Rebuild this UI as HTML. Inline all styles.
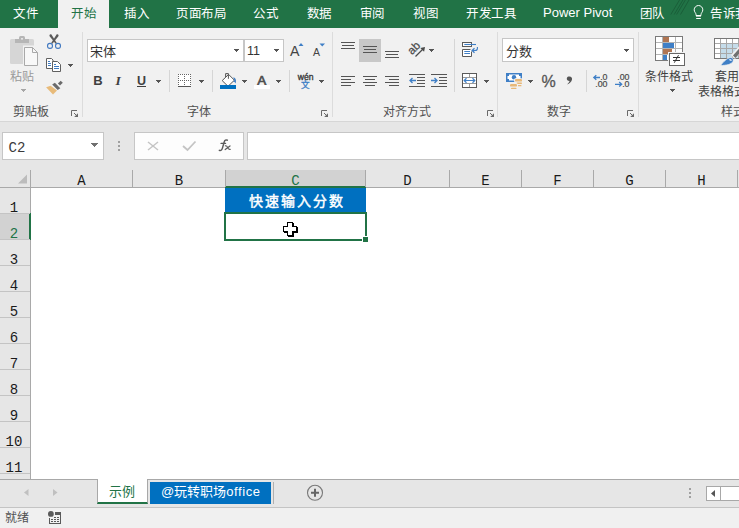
<!DOCTYPE html>
<html lang="zh-CN">
<head>
<meta charset="utf-8">
<style>
*{box-sizing:border-box;margin:0;padding:0}
html,body{width:739px;height:528px;overflow:hidden;background:#fff}
body{position:relative;font-family:"Liberation Sans",sans-serif;color:#262626}
.a{position:absolute}
.t{position:absolute;white-space:nowrap;line-height:1}
.tab{position:absolute;top:6.5px;font-size:12.5px;letter-spacing:-0.5px;color:#fff;white-space:nowrap;line-height:14px}
.gl{position:absolute;top:105px;font-size:12px;color:#505050;line-height:14px;white-space:nowrap}
.rt{position:absolute;font-size:12px;color:#404040;line-height:14px;white-space:nowrap}
.box{position:absolute;background:#fff;border:1px solid #c6c6c6}
.ch{position:absolute;top:0;height:17px;border-right:1px solid #d0d0d0;font-family:"Liberation Mono",monospace;font-size:12px;text-align:center;line-height:19px;color:#262626}
.rh{position:absolute;left:0;width:31px;height:26px;background:#e6e6e6;border-bottom:1px solid #d0d0d0;border-right:1px solid #ababab;font-family:"Liberation Mono",monospace;font-size:12px;text-align:center;line-height:34px;color:#262626}
svg{position:absolute;left:0;top:0}
.hl{position:absolute;width:40px;text-align:center;font-family:"Liberation Mono",monospace;font-size:14px;line-height:20px;white-space:nowrap}
</style>
</head>
<body>
<!-- TAB BAR -->
<div class="a" style="left:0;top:0;width:739px;height:28px;background:#217346"></div>
<div class="a" style="left:58px;top:0;width:51px;height:28px;background:#f1f1f1"></div>
<div class="tab" style="left:13px">文件</div>
<div class="tab" style="left:71px;color:#217346">开始</div>
<div class="tab" style="left:124px">插入</div>
<div class="tab" style="left:176px">页面布局</div>
<div class="tab" style="left:253px">公式</div>
<div class="tab" style="left:306.5px">数据</div>
<div class="tab" style="left:359.5px">审阅</div>
<div class="tab" style="left:413px">视图</div>
<div class="tab" style="left:466px">开发工具</div>
<div class="tab" style="left:543px;font-size:13px;top:5px;line-height:16px;letter-spacing:0">Power Pivot</div>
<div class="tab" style="left:639.5px">团队</div>
<div class="tab" style="left:710px">告诉我</div>

<!-- RIBBON -->
<div class="a" style="left:0;top:28px;width:739px;height:93px;background:#f1f1f1"></div>
<div class="a" style="left:0;top:121px;width:739px;height:1px;background:#d6d6d6"></div>
<div class="gl" style="left:13px">剪贴板</div>
<div class="gl" style="left:187px">字体</div>
<div class="gl" style="left:383px">对齐方式</div>
<div class="gl" style="left:547px">数字</div>
<div class="gl" style="left:721px">样式</div>
<div class="rt" style="left:10px;top:70px;color:#9a9a9a">粘贴</div>
<div class="rt" style="left:645px;top:70px">条件格式</div>
<div class="rt" style="left:715px;top:70px">套用</div>
<div class="rt" style="left:697.5px;top:84.5px">表格格式</div>

<!-- font boxes -->
<div class="box" style="left:87px;top:39px;width:157px;height:23px"></div>
<div class="box" style="left:244px;top:39px;width:40px;height:23px"></div>
<div class="rt" style="left:89.5px;top:44px;font-size:13px;line-height:15px;color:#333">宋体</div>
<div class="t" style="left:247px;top:45px;font-size:12.5px;color:#333">11</div>
<div class="box" style="left:502px;top:38px;width:132px;height:24px"></div>
<div class="rt" style="left:505.5px;top:44px;font-size:13px;line-height:15px;color:#333">分数</div>

<!-- FORMULA BAR -->
<div class="a" style="left:0;top:122px;width:739px;height:48px;background:#e6e6e6"></div>
<div class="box" style="left:2px;top:132px;width:102px;height:28px;border-color:#c6c6c6"></div>
<div class="t" style="left:8.5px;top:138px;font-family:'Liberation Mono',monospace;font-size:14px;line-height:20px;color:#3a3a3a">C2</div>
<div class="box" style="left:134px;top:132px;width:110px;height:28px;background:#fdfdfd"></div>
<div class="box" style="left:247px;top:132px;width:500px;height:28px"></div>

<!-- COLUMN HEADERS -->
<div class="a" style="left:0;top:170px;width:739px;height:17px;background:#e6e6e6"></div>
<div class="a" style="left:226px;top:170px;width:139px;height:16px;background:#d2d2d2"></div>
<div class="a" style="left:225px;top:186px;width:141px;height:2px;background:#217346"></div>
<div class="a" style="left:30px;top:170px;width:1px;height:17px;background:#a9a9a9"></div>
<div class="a" style="left:132px;top:170px;width:1px;height:17px;background:#a9a9a9"></div>
<div class="a" style="left:225px;top:170px;width:1px;height:17px;background:#a9a9a9"></div>
<div class="a" style="left:365px;top:170px;width:1px;height:17px;background:#a9a9a9"></div>
<div class="a" style="left:449px;top:170px;width:1px;height:17px;background:#a9a9a9"></div>
<div class="a" style="left:521px;top:170px;width:1px;height:17px;background:#a9a9a9"></div>
<div class="a" style="left:593px;top:170px;width:1px;height:17px;background:#a9a9a9"></div>
<div class="a" style="left:665px;top:170px;width:1px;height:17px;background:#a9a9a9"></div>
<div class="a" style="left:737px;top:170px;width:1px;height:17px;background:#a9a9a9"></div>
<div class="a" style="left:0;top:187px;width:225px;height:1px;background:#a9a9a9"></div>
<div class="a" style="left:366px;top:187px;width:373px;height:1px;background:#a9a9a9"></div>
<div class="hl" style="left:61.5px;top:171px;color:#1a1a1a">A</div>
<div class="hl" style="left:159.0px;top:171px;color:#1a1a1a">B</div>
<div class="hl" style="left:275.5px;top:171px;color:#217346">C</div>
<div class="hl" style="left:387.5px;top:171px;color:#1a1a1a">D</div>
<div class="hl" style="left:465.5px;top:171px;color:#1a1a1a">E</div>
<div class="hl" style="left:537.5px;top:171px;color:#1a1a1a">F</div>
<div class="hl" style="left:609.5px;top:171px;color:#1a1a1a">G</div>
<div class="hl" style="left:681.5px;top:171px;color:#1a1a1a">H</div>
<!-- ROW HEADERS -->
<div class="a" style="left:0;top:188px;width:30px;height:291px;background:#e6e6e6"></div>
<div class="a" style="left:0;top:214px;width:29px;height:25px;background:#d2d2d2"></div>
<div class="a" style="left:30px;top:170px;width:1px;height:309px;background:#a9a9a9"></div>
<div class="a" style="left:29px;top:213px;width:2px;height:27px;background:#217346"></div>
<div class="a" style="left:0;top:213px;width:30px;height:1px;background:#c4c4c4"></div>
<div class="a" style="left:0;top:239px;width:30px;height:1px;background:#c4c4c4"></div>
<div class="a" style="left:0;top:265px;width:30px;height:1px;background:#c4c4c4"></div>
<div class="a" style="left:0;top:291px;width:30px;height:1px;background:#c4c4c4"></div>
<div class="a" style="left:0;top:317px;width:30px;height:1px;background:#c4c4c4"></div>
<div class="a" style="left:0;top:343px;width:30px;height:1px;background:#c4c4c4"></div>
<div class="a" style="left:0;top:369px;width:30px;height:1px;background:#c4c4c4"></div>
<div class="a" style="left:0;top:395px;width:30px;height:1px;background:#c4c4c4"></div>
<div class="a" style="left:0;top:421px;width:30px;height:1px;background:#c4c4c4"></div>
<div class="a" style="left:0;top:447px;width:30px;height:1px;background:#c4c4c4"></div>
<div class="a" style="left:0;top:473px;width:30px;height:1px;background:#c4c4c4"></div>
<div class="hl" style="left:-6px;top:198px;color:#1a1a1a">1</div>
<div class="hl" style="left:-6px;top:224px;color:#217346">2</div>
<div class="hl" style="left:-6px;top:250px;color:#1a1a1a">3</div>
<div class="hl" style="left:-6px;top:276px;color:#1a1a1a">4</div>
<div class="hl" style="left:-6px;top:302px;color:#1a1a1a">5</div>
<div class="hl" style="left:-6px;top:328px;color:#1a1a1a">6</div>
<div class="hl" style="left:-6px;top:354px;color:#1a1a1a">7</div>
<div class="hl" style="left:-6px;top:380px;color:#1a1a1a">8</div>
<div class="hl" style="left:-6px;top:406px;color:#1a1a1a">9</div>
<div class="hl" style="left:-6px;top:432px;color:#1a1a1a">10</div>
<div class="hl" style="left:-6px;top:458px;color:#1a1a1a">11</div>
<!-- CELLS -->
<div class="a" style="left:225px;top:188px;width:141px;height:24px;background:#0070c0"></div>
<div class="t" style="left:249px;top:194px;font-size:14px;font-weight:normal;-webkit-text-stroke:0.45px #fff;color:#fff;letter-spacing:2px">快速输入分数</div>
<div class="a" style="left:224px;top:212px;width:143px;height:29px;border:2px solid #217346"></div>
<div class="a" style="left:362px;top:236px;width:7px;height:7px;background:#217346;border:1px solid #fff"></div>

<!-- SHEET TABS -->
<div class="a" style="left:0;top:479px;width:739px;height:29px;background:#e6e6e6;border-top:1px solid #a8a8a8;border-bottom:1px solid #c4c4c4"></div>
<div class="a" style="left:97px;top:479px;width:51px;height:25px;background:#fff;border-left:1px solid #a8a8a8;border-right:1px solid #a8a8a8;border-bottom:2px solid #217346"></div>
<div class="t" style="left:109px;top:485px;font-size:13px;color:#217346">示例</div>
<div class="a" style="left:150px;top:482px;width:121px;height:22px;background:#0070c0"></div>
<div class="t" style="left:161px;top:484px;font-size:13px;color:#fff;line-height:15px">@玩转职场<span style="letter-spacing:0.6px">office</span></div>
<div class="a" style="left:273px;top:482px;width:1px;height:22px;background:#b0b0b0"></div>
<div class="a" style="left:706px;top:486px;width:15px;height:15px;background:#fff;border:1px solid #a8a8a8"></div>
<div class="a" style="left:720px;top:486px;width:30px;height:15px;background:#fff;border:1px solid #a8a8a8"></div>

<!-- STATUS -->
<div class="a" style="left:0;top:508px;width:739px;height:20px;background:#f0f0f0"></div>
<div class="t" style="left:5px;top:511px;font-size:12px;color:#505050;line-height:14px">就绪</div>

<svg width="739" height="528" viewBox="0 0 739 528">
 <!-- tab bar hatch + bulb -->
 <g stroke="#1a5e39" stroke-width="1">
  <line x1="679.5" y1="0" x2="670.8" y2="14.5"/><line x1="682.9" y1="0" x2="674.2" y2="14.5"/>
  <line x1="685.3" y1="0" x2="676.6" y2="14.5"/><line x1="689" y1="0" x2="680.5" y2="14.5"/>
 </g>
 <g fill="none" stroke="#fff" stroke-width="1">
  <path d="M696 15.5 V14.5 C696 13 694.2 12 694.2 9.8 A4.3 4.3 0 0 1 702.8 9.8 C702.8 12 701 13 701 14.5 V15.5 Z"/>
 </g>
 <rect x="696" y="15" width="5" height="1.6" fill="#fff"/>
 <rect x="696.2" y="18" width="4.6" height="1" fill="#fff"/>
 <!-- group separators -->
 <g fill="#dcdcdc">
  <rect x="82" y="32" width="1" height="85"/><rect x="332" y="32" width="1" height="85"/>
  <rect x="497" y="32" width="1" height="85"/><rect x="638" y="32" width="1" height="85"/>
 </g>
 <!-- launchers -->
 <g>
  <path d="M71.5 116 V110.5 H77" fill="none" stroke="#6a6a6a"/><path d="M78 113.2 V117 H74.2 Z" fill="#6a6a6a"/><path d="M74 113 L76.5 115.5" stroke="#6a6a6a" stroke-width="1"/>
  <path d="M321.5 116 V110.5 H327" fill="none" stroke="#6a6a6a"/><path d="M328 113.2 V117 H324.2 Z" fill="#6a6a6a"/><path d="M324 113 L326.5 115.5" stroke="#6a6a6a" stroke-width="1"/>
  <path d="M487.5 116 V110.5 H493" fill="none" stroke="#6a6a6a"/><path d="M494 113.2 V117 H490.2 Z" fill="#6a6a6a"/><path d="M490 113 L492.5 115.5" stroke="#6a6a6a" stroke-width="1"/>
  <path d="M627.5 116 V110.5 H633" fill="none" stroke="#6a6a6a"/><path d="M634 113.2 V117 H630.2 Z" fill="#6a6a6a"/><path d="M630 113 L632.5 115.5" stroke="#6a6a6a" stroke-width="1"/>
 </g>
 <!-- paste -->
 <rect x="10" y="39" width="24" height="25" rx="1.5" fill="#d6d6d6"/>
 <rect x="15" y="39" width="14" height="4" fill="#b6b6b6"/>
 <path d="M19 40 V37.5 Q19 36 20.5 36 H23.5 Q25 36 25 37.5 V40 Z" fill="#b6b6b6"/>
 <rect x="21.2" y="38" width="1.6" height="1.6" fill="#f1f1f1"/>
 <rect x="23" y="45.5" width="16" height="21" fill="#f1f1f1"/>
 <path d="M24.5 47.5 H32.5 L37.5 52.5 V65.5 H24.5 Z" fill="#f8f8f8" stroke="#a9a9a9"/>
 <path d="M32.5 47.5 V52.5 H37.5" fill="none" stroke="#a9a9a9"/>
 <!-- scissors -->
 <path d="M49.4 35.2 C49.8 34.2 51 34 51.6 34.8 L56.8 43 L55.6 43.8 L49.8 36.4 Z" fill="#5a5a5a"/>
 <path d="M58.6 35.2 C58.2 34.2 57 34 56.4 34.8 L51.2 43 L52.4 43.8 L58.2 36.4 Z" fill="#5a5a5a"/>
 <g stroke="#4279c0" stroke-width="1.1" fill="none">
  <circle cx="50" cy="45.9" r="2.5"/><circle cx="58" cy="45.9" r="2.5"/>
 </g>
 <!-- copy -->
 <path d="M46.5 58.5 H51.5 L53 60 V68.5 H46.5 Z" fill="#fff" stroke="#606060"/>
 <path d="M52.5 61.5 H57.5 L60.5 64.5 V71.5 H52.5 Z" fill="#fff" stroke="#606060"/>
 <rect x="50.8" y="59.8" width="1.8" height="1.8" fill="#606060" opacity="0"/>
 <g stroke="#3f7bc0" stroke-width="1"><line x1="48" y1="61.5" x2="50" y2="61.5"/><line x1="48" y1="63.5" x2="51" y2="63.5"/><line x1="48" y1="65.5" x2="51" y2="65.5"/>
 <line x1="54" y1="64.5" x2="56" y2="64.5"/><line x1="54" y1="66.5" x2="59" y2="66.5"/><line x1="54" y1="68.5" x2="59" y2="68.5"/></g>
 <!-- format painter -->
 <path d="M46.1 87.3 L50.6 85.8 L57 90.6 L53 94.6 Z" fill="#e8bb7a"/>
 <path d="M52.2 84.5 L54.9 82.8 L60.3 88.3 L57.7 90 Z" fill="#6a6a6a"/>
 <path d="M57.9 83.4 L60.7 80.7 L62.8 82.8 L60 85.4 Z" fill="#6a6a6a"/>

 <!-- font box arrows -->
 <g fill="#555">
 </g>
 <!-- grow/shrink font -->
 <text x="290" y="56" font-family="Liberation Sans" font-size="14.2" fill="#444">A</text>
 <path d="M298.5 46 L301 43 L303.5 46 Z" fill="#3f7fc6"/>
 <text x="313" y="56" font-family="Liberation Sans" font-size="10.5" fill="#444">A</text>
 <path d="M319.5 43.5 L322.25 46.5 L325 43.5 Z" fill="#3f7fc6"/>
 <!-- B I U -->
 <text x="93.3" y="85" font-family="Liberation Sans" font-weight="bold" font-size="13" fill="#404040">B</text>
 <text x="115.5" y="85" font-family="Liberation Serif" font-style="italic" font-weight="bold" font-size="13.5" fill="#404040">I</text>
 <text x="137" y="85" font-family="Liberation Sans" font-weight="bold" font-size="12.5" fill="#404040">U</text>
 <rect x="137" y="86" width="9" height="1" fill="#404040"/>
 <g fill="#555">
 </g>
 <rect x="169" y="70" width="1" height="22" fill="#d6d6d6"/>
 <rect x="212" y="70" width="1" height="22" fill="#d6d6d6"/>
 <rect x="289" y="70" width="1" height="22" fill="#d6d6d6"/>
 <!-- borders icon -->
 <rect x="178" y="74" width="13" height="12" fill="#fff"/>
 <g fill="#666">
  <path d="M178 74h1v1h-1zM180 74h1v1h-1zM182 74h1v1h-1zM184 74h1v1h-1zM186 74h1v1h-1zM188 74h1v1h-1zM190 74h1v1h-1z"/>
  <path d="M178 80h1v1h-1zM180 80h1v1h-1zM182 80h1v1h-1zM186 80h1v1h-1zM188 80h1v1h-1zM190 80h1v1h-1zM184 80h1v1h-1z"/>
  <path d="M178 76h1v1h-1zM178 78h1v1h-1zM178 82h1v1h-1zM178 84h1v1h-1zM184 76h1v1h-1zM184 78h1v1h-1zM184 82h1v1h-1zM184 84h1v1h-1zM190 76h1v1h-1zM190 78h1v1h-1zM190 82h1v1h-1zM190 84h1v1h-1z"/>
 </g>
 <rect x="178" y="86" width="13" height="1" fill="#555"/>
 <!-- fill color -->
 <path d="M222.2 80.6 L228.6 74.4 L234.4 80.2 L228 86.3 Z" fill="#fff" stroke="#555" stroke-width="1"/>
 <path d="M225.6 77 V73.6 H228.4 V78.8" stroke="#555" stroke-width="1" fill="none"/>
 <path d="M233.2 77.6 C235.6 77.6 236.6 80 235.6 83.6 C235 82.2 234 81.4 232.8 81.6 L234.4 80.2 Z" fill="#3f7fc6"/>
 <rect x="220" y="85" width="16" height="4" fill="#0070c0"/>
 <!-- font color -->
 <text x="257.3" y="84.8" font-family="Liberation Sans" font-size="13.5" fill="#505050" stroke="#505050" stroke-width="0.7">A</text>
 <rect x="254" y="85" width="16" height="4" fill="#ffffff"/>
 <!-- phonetic -->
 <text x="297.8" y="80" font-family="Liberation Sans" font-size="8.6" fill="#3a3a3a" stroke="#3a3a3a" stroke-width="0.35">wén</text>
 <text x="301.2" y="88.2" font-size="8.6" fill="#3f7fc6" stroke="#3f7fc6" stroke-width="0.3">文</text>

 <!-- alignment -->
 <rect x="359" y="39" width="22" height="23" fill="#c8c8c8"/>
 <g stroke="#555" stroke-width="1">
  <line x1="341" y1="42.5" x2="355" y2="42.5"/><line x1="342" y1="45.5" x2="354" y2="45.5"/><line x1="341" y1="48.5" x2="355" y2="48.5"/>
  <line x1="363" y1="46.5" x2="377" y2="46.5"/><line x1="364" y1="49.5" x2="376" y2="49.5"/><line x1="363" y1="52.5" x2="377" y2="52.5"/>
  <line x1="385" y1="51.5" x2="399" y2="51.5"/><line x1="386" y1="54.5" x2="398" y2="54.5"/><line x1="385" y1="57.5" x2="399" y2="57.5"/>
  <!-- row2 -->
  <line x1="341" y1="76.5" x2="355" y2="76.5"/><line x1="341" y1="79.5" x2="351" y2="79.5"/><line x1="341" y1="82.5" x2="355" y2="82.5"/><line x1="341" y1="85.5" x2="351" y2="85.5"/>
  <line x1="363" y1="76.5" x2="377" y2="76.5"/><line x1="365" y1="79.5" x2="375" y2="79.5"/><line x1="363" y1="82.5" x2="377" y2="82.5"/><line x1="365" y1="85.5" x2="375" y2="85.5"/>
  <line x1="385" y1="76.5" x2="399" y2="76.5"/><line x1="389" y1="79.5" x2="399" y2="79.5"/><line x1="385" y1="82.5" x2="399" y2="82.5"/><line x1="389" y1="85.5" x2="399" y2="85.5"/>
  <line x1="409" y1="74.5" x2="425" y2="74.5"/><line x1="417" y1="77.5" x2="425" y2="77.5"/><line x1="417" y1="80.5" x2="425" y2="80.5"/><line x1="417" y1="83.5" x2="425" y2="83.5"/><line x1="409" y1="86.5" x2="425" y2="86.5"/>
  <line x1="431" y1="74.5" x2="447" y2="74.5"/><line x1="439" y1="77.5" x2="447" y2="77.5"/><line x1="439" y1="80.5" x2="447" y2="80.5"/><line x1="439" y1="83.5" x2="447" y2="83.5"/><line x1="431" y1="86.5" x2="447" y2="86.5"/>
 </g>
 <g stroke="#3f7fc6" stroke-width="1.3" fill="none">
  <path d="M416 80.5 H410 M412.5 78 L410 80.5 L412.5 83"/>
  <path d="M431 80.5 H437 M434.5 78 L437 80.5 L434.5 83"/>
 </g>
 <!-- orientation -->
 <text x="0" y="0" font-family="Liberation Sans" font-size="11.5" fill="#4a4a4a" stroke="#4a4a4a" stroke-width="0.25" transform="translate(412,55.2) rotate(-45)">ab</text>
 <path d="M415.5 56.5 L423 49" stroke="#4a4a4a" stroke-width="1.2"/>
 <path d="M425 47 L420.3 47.9 L424.1 51.7 Z" fill="#4a4a4a"/>
 <rect x="454" y="39" width="1" height="53" fill="#d6d6d6"/>
 <!-- wrap text -->
 <g fill="#fff" stroke="#5a5a5a" stroke-width="1">
  <rect x="462.5" y="42.5" width="9" height="4"/>
  <path d="M470.5 49.5 H462.5 V56.5 H471.5 V51.5"/>
 </g>
 <g stroke="#3f7fc6" stroke-width="1.1" fill="none">
  <path d="M464.3 44.5 H476"/>
  <path d="M464.3 51.5 H470 M464.3 53.5 H470"/>
  <path d="M477.4 47 V48.5 C477.4 50 476.5 50.5 475 50.5 H472"/>
  <path d="M474.5 48.3 L472.2 50.5 L474.5 52.7" stroke-width="1.3"/>
 </g>
 <!-- merge -->
 <rect x="462.5" y="73.5" width="14" height="14" fill="#fff"/>
 <g fill="none" stroke="#9a9a9a" stroke-width="1">
  <path d="M462.5 77.5 H476.5 M462.5 83.5 H476.5 M469.5 73.5 V77.5 M469.5 83.5 V87.5"/>
 </g>
 <rect x="462.5" y="73.5" width="14" height="14" fill="none" stroke="#5a5a5a"/>
 <path d="M464.5 80.5 H474.5" stroke="#3f7fc6" stroke-width="1"/>
 <path d="M466.5 78.3 L464.2 80.5 L466.5 82.7 M472.5 78.3 L474.8 80.5 L472.5 82.7" fill="none" stroke="#3f7fc6" stroke-width="1.2"/>

 <!-- number -->
 <rect x="586" y="70" width="1" height="22" fill="#d6d6d6"/>
 <g>
  <rect x="506" y="73" width="16" height="9" fill="#3f7fc6"/>
  <path d="M509 74.5 H519 V76 H520.5 V79 H519 V80.5 H509 V79 H507.5 V76 H509 Z" fill="#fff"/>
  <circle cx="514" cy="77.2" r="2.2" fill="#3f7fc6"/>
  <rect x="514" y="78.3" width="9" height="4" rx="1.5" fill="#f1f1f1"/>
  <rect x="515" y="79" width="7" height="2.6" rx="1.2" fill="#e8b877"/>
  <rect x="516.5" y="82.6" width="5.5" height="1.3" rx="0.6" fill="#e8b877"/>
  <rect x="517.5" y="85" width="4" height="1.3" rx="0.6" fill="#e8b877"/>
  <rect x="509" y="83.3" width="9" height="4" rx="1.5" fill="#f1f1f1"/>
  <rect x="510" y="84" width="7" height="2.6" rx="1.2" fill="#e8b877"/>
  <rect x="511" y="87.8" width="5.5" height="1.3" rx="0.6" fill="#e8b877"/>
 </g>
 <text x="541.5" y="87" font-family="Liberation Sans" font-size="16" fill="#555" stroke="#555" stroke-width="0.3">%</text>
 <path d="M568.5 76.5 C571 76 572.5 77.5 572 79.5 C571.5 82 569.5 83.5 567 84.5 C568.5 83 569.5 82 569.5 81 C567.5 81 566.8 80 566.8 78.8 C566.8 77.5 567.5 76.7 568.5 76.5 Z" fill="#555"/>
 <g font-family="Liberation Sans" font-size="8.8" fill="#4a4a4a" stroke="#4a4a4a" stroke-width="0.2" text-anchor="end">
  <text x="607.5" y="80.2">.0</text><text x="607.5" y="87.2">.00</text>
  <text x="629.5" y="80.2">.00</text><text x="629.5" y="87.2">.0</text>
 </g>
 <path d="M600 77.5 H594 M596.3 75.2 L593.8 77.5 L596.3 79.8" stroke="#3f7fc6" fill="none" stroke-width="1.3"/>
 <path d="M615 84.3 H621.5 M619.2 82 L621.7 84.3 L619.2 86.6" stroke="#3f7fc6" fill="none" stroke-width="1.3"/>

 <!-- conditional formatting -->
 <rect x="655.5" y="36.5" width="27" height="24" fill="#fff"/>
 <g fill="none" stroke="#b4b4b4" stroke-width="1">
  <path d="M662.5 36.5 V60.5 M675.5 36.5 V60.5 M655.5 42.5 H682.5 M655.5 48.5 H682.5 M655.5 54.5 H682.5"/>
 </g>
 <rect x="663" y="37" width="6" height="5" fill="#b07552"/>
 <rect x="663" y="43" width="11" height="5" fill="#3f7fc6"/>
 <rect x="663" y="49" width="9" height="5" fill="#b07552"/>
 <rect x="663" y="55" width="4" height="5" fill="#3f7fc6"/>
 <rect x="655.5" y="36.5" width="27" height="24" fill="none" stroke="#7a7a7a"/>
 <rect x="668" y="52" width="18" height="15" fill="#f1f1f1"/>
 <rect x="669.5" y="53.5" width="15" height="12" fill="#fff" stroke="#666"/>
 <path d="M673 57.5 H680 M673 60.5 H680 M678.5 55.2 L674.3 62.7" stroke="#333" stroke-width="1" fill="none"/>
 <!-- format as table -->
 <rect x="714.5" y="38.5" width="30" height="20" fill="#fff"/>
 <rect x="721" y="44" width="18" height="14" fill="#c5dcea"/>
 <g fill="none" stroke="#a8a8a8" stroke-width="1">
  <path d="M720.5 38.5 V58.5 M726.5 38.5 V58.5 M732.5 38.5 V58.5 M738.5 38.5 V58.5 M714.5 43.5 H744 M714.5 48.5 H744 M714.5 53.5 H744"/>
 </g>
 <rect x="714.5" y="38.5" width="30" height="20" fill="none" stroke="#777"/>
 <path d="M731 55 L741 44 L745 48 L735 59 Z" fill="#f1f1f1"/>
 <path d="M733 55.5 L740 47.5 L742.5 50 L735.5 58 Z" fill="#707070"/>
 <path d="M720.5 65.5 C723 62 727 58 730.5 57.5 C733 57.3 734 59.5 733 61.5 C731.5 64.5 726 65.5 720.5 65.5 Z" fill="#3f7fc6" stroke="#f1f1f1" stroke-width="0.8"/>
 <path d="M729 59.5 C730.5 58.8 732 59.2 731.5 61 C730.5 60.8 729.5 60.5 729 59.5 Z" fill="#fff"/>
 <!-- formula bar -->
 <g fill="#a0a0a0"><rect x="118" y="141" width="2" height="2"/><rect x="118" y="145" width="2" height="2"/><rect x="118" y="149" width="2" height="2"/></g>
 <g stroke="#c4c4c4" stroke-width="1.5"><line x1="148" y1="142" x2="158" y2="150"/><line x1="158" y1="142" x2="148" y2="150"/></g>
 <path d="M183 146 L187.5 150 L195.5 141.5" stroke="#c4c4c4" stroke-width="1.8" fill="none"/>
 <g fill="none" stroke="#5a5a5a" stroke-width="1.4" stroke-linecap="round">
  <path d="M219.3 150.3 C220.8 151 221.9 150.2 222.4 148.2 L224.2 142 C224.7 140.2 226 139.6 227.4 140.2"/>
  <path d="M221 143.4 H225.6" stroke-width="1.2"/>
  <path d="M225.3 145.8 C226.6 145.5 227.1 146.4 227.6 147.6 C228.1 148.9 228.7 149.6 230.2 149.3" stroke-width="1.2"/>
  <path d="M230 145.9 L225.2 149.6" stroke-width="1.2"/>
 </g>

 <!-- select all triangle -->
 <path d="M27 174.5 V183.5 H18 Z" fill="#bcbcbc"/>

 <!-- sheet tab arrows, plus, dots -->
 <path d="M28.5 489 V496 L24 492.5 Z" fill="#c0c0c0"/>
 <path d="M53 489 V496 L57.5 492.5 Z" fill="#c0c0c0"/>
 <circle cx="315" cy="492.8" r="7.5" fill="none" stroke="#7a7a7a" stroke-width="1.1"/>
 <path d="M311 492.8 H319 M315 488.8 V496.8" stroke="#666" stroke-width="2"/>
 <g fill="#a0a0a0"><rect x="689" y="488" width="2" height="2"/><rect x="689" y="492" width="2" height="2"/><rect x="689" y="496" width="2" height="2"/></g>
 <path d="M715 490 V497 L711 493.5 Z" fill="#555"/>
 <!-- macro icon -->
 <g shape-rendering="crispEdges" fill="#595959">
  <rect x="49" y="518" width="1" height="6"/><rect x="49" y="523" width="12" height="1"/><rect x="60" y="515" width="1" height="9"/>
  <rect x="55" y="512" width="6" height="3"/>
  <rect x="54" y="517" width="2" height="1"/><rect x="57" y="517" width="2" height="1"/>
  <rect x="51" y="519" width="2" height="1"/><rect x="54" y="519" width="2" height="1"/><rect x="57" y="519" width="2" height="1"/>
  <rect x="51" y="521" width="2" height="1"/><rect x="54" y="521" width="2" height="1"/><rect x="57" y="521" width="2" height="1"/>
 </g>
 <rect x="50" y="515" width="10" height="8" fill="#fff" opacity="0"/>
 <circle cx="50.9" cy="513.9" r="2.9" fill="#595959"/>
 <!-- crisp arrows -->
 <g shape-rendering="crispEdges"><rect x="21" y="89" width="5" height="1" fill="#a6a6a6"/><rect x="22" y="90" width="3" height="1" fill="#a6a6a6"/><rect x="23" y="91" width="1" height="1" fill="#a6a6a6"/><rect x="68" y="64" width="5" height="1" fill="#555"/><rect x="69" y="65" width="3" height="1" fill="#555"/><rect x="70" y="66" width="1" height="1" fill="#555"/><rect x="234" y="49" width="5" height="1" fill="#555"/><rect x="235" y="50" width="3" height="1" fill="#555"/><rect x="236" y="51" width="1" height="1" fill="#555"/><rect x="274" y="49" width="5" height="1" fill="#555"/><rect x="275" y="50" width="3" height="1" fill="#555"/><rect x="276" y="51" width="1" height="1" fill="#555"/><rect x="624" y="49" width="5" height="1" fill="#555"/><rect x="625" y="50" width="3" height="1" fill="#555"/><rect x="626" y="51" width="1" height="1" fill="#555"/><rect x="156" y="80" width="5" height="1" fill="#555"/><rect x="157" y="81" width="3" height="1" fill="#555"/><rect x="158" y="82" width="1" height="1" fill="#555"/><rect x="199" y="80" width="5" height="1" fill="#555"/><rect x="200" y="81" width="3" height="1" fill="#555"/><rect x="201" y="82" width="1" height="1" fill="#555"/><rect x="242" y="80" width="5" height="1" fill="#555"/><rect x="243" y="81" width="3" height="1" fill="#555"/><rect x="244" y="82" width="1" height="1" fill="#555"/><rect x="276" y="80" width="5" height="1" fill="#555"/><rect x="277" y="81" width="3" height="1" fill="#555"/><rect x="278" y="82" width="1" height="1" fill="#555"/><rect x="319" y="80" width="5" height="1" fill="#555"/><rect x="320" y="81" width="3" height="1" fill="#555"/><rect x="321" y="82" width="1" height="1" fill="#555"/><rect x="429" y="49" width="5" height="1" fill="#555"/><rect x="430" y="50" width="3" height="1" fill="#555"/><rect x="431" y="51" width="1" height="1" fill="#555"/><rect x="484" y="80" width="5" height="1" fill="#555"/><rect x="485" y="81" width="3" height="1" fill="#555"/><rect x="486" y="82" width="1" height="1" fill="#555"/><rect x="528" y="80" width="5" height="1" fill="#555"/><rect x="529" y="81" width="3" height="1" fill="#555"/><rect x="530" y="82" width="1" height="1" fill="#555"/><rect x="670" y="89" width="5" height="1" fill="#555"/><rect x="671" y="90" width="3" height="1" fill="#555"/><rect x="672" y="91" width="1" height="1" fill="#555"/><rect x="91" y="143" width="7" height="1" fill="#707070"/><rect x="92" y="144" width="5" height="1" fill="#707070"/><rect x="93" y="145" width="3" height="1" fill="#707070"/><rect x="94" y="146" width="1" height="1" fill="#707070"/></g>
 <!-- cursor -->
 <g shape-rendering="crispEdges">
 <rect x="288" y="223" width="6" height="14" fill="#000"/><rect x="284" y="227" width="14" height="6" fill="#000"/>
 <rect x="287" y="222" width="6" height="14" fill="#000"/><rect x="283" y="226" width="14" height="6" fill="#000"/>
 <rect x="288" y="223" width="4" height="12" fill="#fff"/><rect x="284" y="227" width="12" height="4" fill="#fff"/>
 </g>
</svg>
</body>
</html>
